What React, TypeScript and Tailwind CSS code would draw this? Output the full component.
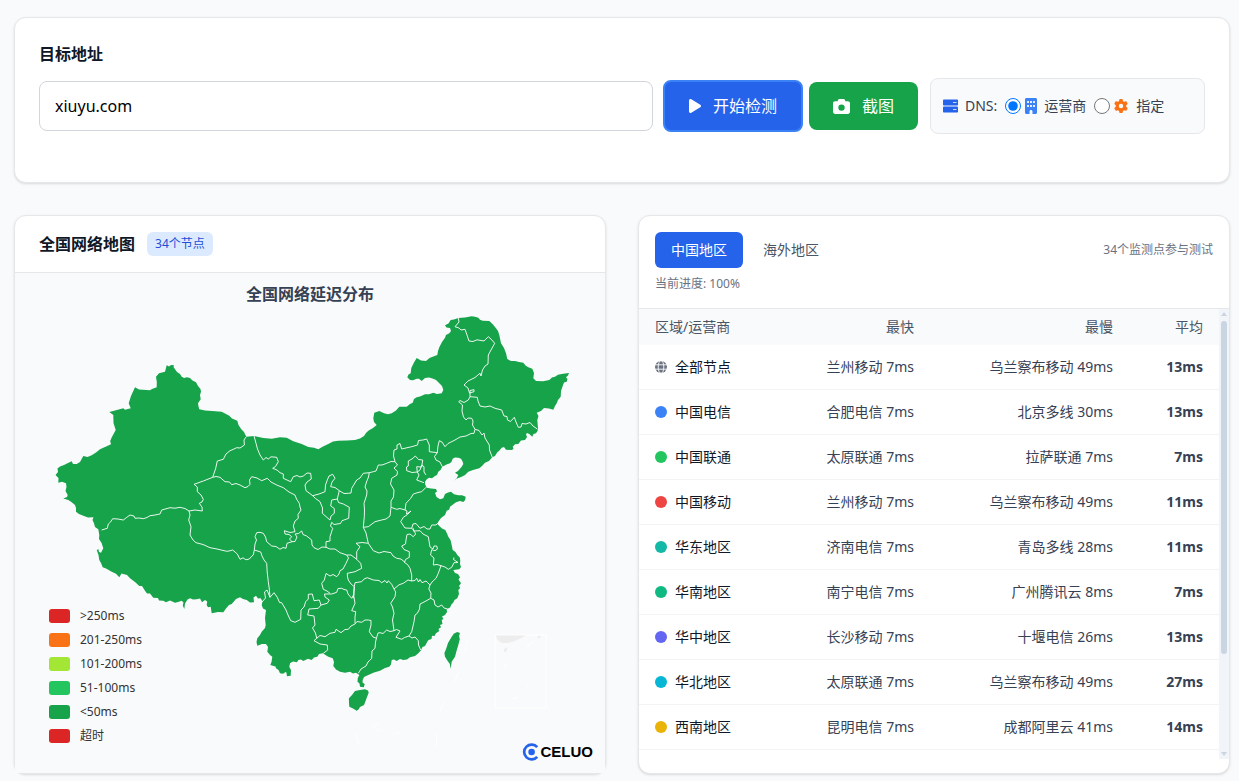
import { FaBuilding, FaCamera, FaGear, FaPlay } from "react-icons/fa6"

const regions = [
  { name: "全部节点", color: "", fastest: "兰州移动 7ms", slowest: "乌兰察布移动 49ms", avg: "13ms" },
  { name: "中国电信", color: "bg-[#3b82f6]", fastest: "合肥电信 7ms", slowest: "北京多线 30ms", avg: "13ms" },
  { name: "中国联通", color: "bg-[#22c55e]", fastest: "太原联通 7ms", slowest: "拉萨联通 7ms", avg: "7ms" },
  { name: "中国移动", color: "bg-[#ef4444]", fastest: "兰州移动 7ms", slowest: "乌兰察布移动 49ms", avg: "11ms" },
  { name: "华东地区", color: "bg-[#14b8a6]", fastest: "济南电信 7ms", slowest: "青岛多线 28ms", avg: "11ms" },
  { name: "华南地区", color: "bg-[#10b981]", fastest: "南宁电信 7ms", slowest: "广州腾讯云 8ms", avg: "7ms" },
  { name: "华中地区", color: "bg-[#6366f1]", fastest: "长沙移动 7ms", slowest: "十堰电信 26ms", avg: "13ms" },
  { name: "华北地区", color: "bg-[#06b6d4]", fastest: "太原联通 7ms", slowest: "乌兰察布移动 49ms", avg: "27ms" },
  { name: "西南地区", color: "bg-[#eab308]", fastest: "昆明电信 7ms", slowest: "成都阿里云 41ms", avg: "14ms" },
]

const legend = [
  { label: ">250ms", color: "bg-[#dc2626]" },
  { label: "201-250ms", color: "bg-[#f97316]" },
  { label: "101-200ms", color: "bg-[#a3e635]" },
  { label: "51-100ms", color: "bg-[#22c55e]" },
  { label: "<50ms", color: "bg-[#16a34a]" },
  { label: "超时", color: "bg-[#dc2626]" },
]

const mainland =
  "M166.7 365.3L169 366.5L171 365L174 365.3L173.5 367L174.7 368.7L177 372L180 374L181.5 376.5L184 378L187 377.2L190 378L192.5 380.6L196 382.3L198 386L200.5 389L201 391.7L200 395L200.7 399.3L198 403.3L198.5 406.5L199.3 409.3L205 410.5L212 411L221.7 411.7L226 414L229.3 415.7L232 418.5L237.3 420.7L238.5 425L241.3 429.3L244 432L246.3 436.7L254 436L263.3 438L271.7 438.7L280 437.2L286.7 437.7L290 439.5L293.3 441.3L301.7 444L308.3 447L314 447.7L318.3 449.3L323 446.5L328.3 444L333 441.6L338.3 440.7L347 440.6L355 440L360 438.5L364 436L366 433L368.3 430.7L373 428L376.7 425L374 422L373.3 418.3L374.3 412.7L379.3 411L384 413.3L388 414.2L391.7 413.3L396 410.5L399.3 406.7L406.7 406.7L410 404L412.7 402.7L414 399L416.7 397.3L420 396.6L425 394.3L429 394.2L433.3 392.7L437 394L441.7 393.3L443.3 390L442 386L439.3 383.3L436 380L433.3 378.7L429 377.4L425 378L421.7 381L419 378.8L416.7 378.7L413 380.2L410 380L407.3 377.3L408.5 374.5L410.7 373.3L411.3 368L414 362.5L416.7 358L421 360.5L426 361L429.5 358L432.7 356.7L437.3 355L438 351L439.3 347.3L442 342L445 337.7L446 335L449.3 333.3L451 331L450 328L446.5 327.5L445 325.3L448.5 323.5L450.7 320L454 319.5L458.3 318L465 317.5L471.7 316.3L475 316.8L478.3 317.7L480 319.8L482.7 320.7L489.3 321L493 324.5L496 328.3L498 331L499.3 335L501 343.3L504 348L506 353.3L507.3 359L511 361L515 361L519 362L523.3 362.7L525.5 365.5L528.3 367.3L532.3 368.7L534 373L533.3 378.3L536 381L543 381.2L549.3 380L552 377.5L555 376.7L558 374.8L561.7 374L565 373.5L569 373L568 375.5L566 377.3L567.5 379L566.7 381.7L564 382.5L562.7 386L561 391L560.7 396.7L558 400L556.7 403.3L555 406L553.3 409.7L549 408.5L544 408L541 411L536.7 412.7L538.5 416L537.3 420L538 428.3L537.5 431L536 433.3L533.5 434L532.3 436.7L529.3 434L527 433L526 434.3L527 437L525 440L521 440.5L518.3 444L515 444.2L512.7 446.7L513.5 449L511.7 450L506 449.7L504 447L501.7 447.7L499 451L497.3 452.3L495 456L492.3 457.3L489 461L485 462.7L482 466L479.3 468.3L473 470L468.3 471.7L465 475L461.7 476.7L457 478.5L454 480.7L456.5 478.5L458.3 475L455 472.7L458 471L461.7 466.7L463.3 464L462.7 461.7L461 458.7L458.3 457.7L455 457.6L452.7 458.7L451.5 461.8L450 463.3L446.5 464.5L442.3 466.7L440.5 470L438.3 471.7L437 475L435 476L432 478.2L429.3 477.7L427 479L425 481.7L425.2 484.6L426.7 487.7L431 488.5L436 489L437 491.5L435 493L436.5 497L440 499.3L443.3 498.3L445 494L448 492.6L451 491.7L454 494.2L458.3 495.3L462 495.3L465.7 496.7L465.2 500L463.3 502L460 500.9L456 502.3L453 504.6L450 506.7L449.3 509.5L446.7 510.7L445 515L441 518L438.3 521.7L437.5 524L439.3 526L442 528.6L445.3 530L447 533.5L448.3 536.7L450.5 540L451.3 543.3L452.7 550L455.5 552L457.3 555L459.8 557.5L460.3 560.7L460 564L461 567L459.3 569.3L453.3 570L455 573L458 574L460 577.3L458.5 579.5L461 583.3L459 586L460.2 588L458.3 590L459 594L457.3 598.3L454.5 600L453 603L451.7 604L450 607.5L446.7 609.3L447 612L445 615L442 616.5L443.5 619L441.7 620L442.5 624L440 625L441 627.3L438.5 629L439.3 631L436 633.3L434.5 636L432 635.7L431.5 639L428.5 640L427.3 641.7L425 646L422.5 647L420.7 650.7L418.3 653.3L415 656L410 657.2L407 659.5L403.3 660L400 659L396.7 661L394 659.6L391.7 660L391 664.5L389.3 666.7L385 668L380 670.7L374 672.5L368.3 675L364 677L362.7 680L362.5 682.5L364.7 684L363.8 687.3L360 686.7L359.5 683.5L357.5 681.7L357.8 678L359.3 675L356 672.8L353 673.5L350 671.7L345 672.8L340 671.7L336 669.5L333.3 666L334 662L332.7 658.3L328.3 656.7L322.7 653.3L319 654L317.3 656.7L314 657.5L311.7 660L308 658.7L303.3 661L301 659.4L298.3 660L297 662.3L293 661.5L290 663.3L289.3 667L291 670L290.7 675.7L287 676.3L286.6 673.5L286 671.7L283 673.8L280 673.3L278.5 670L276 668.3L275.5 666.4L270.3 665L271.5 662L272.3 656.7L270 655L267.3 651.7L268 647L266 644L262 644L257.3 645.7L256.5 642L257.3 638.3L260 635L261.7 631.7L265 628L265.7 625L265 618L266 610L263 608.5L261.7 605L262.5 601.5L260.7 598.3L258 598.5L256 595.7L253.5 597.5L254 602.3L250 602.4L246.7 600L243 598.9L240 597.3L236 599L231.7 604L229 605L226 608.5L223.3 612.3L218 612L211.7 613.3L210.7 606.7L208 607.2L206.7 605L207.2 601.5L205 600L202 602.2L200 598.5L196.7 599.3L193 599.5L190 598.3L187.5 599.5L185 603.5L184.3 609L182.8 605.5L183.5 602.5L181.7 600.7L178 602L175 602.7L170 600.4L166 602.3L163.3 600.7L159 600.5L158 598L153.3 597.7L150 593.5L147 593.5L145 590.7L142 586L139.3 586L135 582L130 578.3L127 575L123.3 574L121.5 573.5L119.3 577.3L116 573.8L111.7 571.7L106 568.5L102.7 567.3L101 563L99.3 560L98.5 555L96.7 550L98.4 549.3L99 552L101 552.7L103.3 548.3L101.6 543L99 539L99.3 535L98.3 529.3L95 527L94 523.3L92.5 520L93.5 517.2L88 517.5L83.3 515.7L79 514L76 511.7L76 508L75 505L71 501.8L68.3 500L63.3 498.6L67 497L67.7 495L65.5 491L66.5 487L66 483.3L62 481.8L58.3 482.7L58.5 478L55.5 475L58 472L57.5 468.5L60 466.5L64 465L68 463L71.7 461.2L73 464L76.7 464L80 462L83.3 456L87.5 457L91.7 455.3L96 452.5L100 449.3L105 447L111 444.3L110.2 441L111.8 437.3L115.7 430L113.5 423L113.3 415L109.3 412L115 410.5L123.3 408.3L125 409.7L130.7 408.3L128.7 403.3L131 396L135 387.3L139 389.5L150 390.3L152 389L156.7 387.3L156.8 382L156 376.7L159 373.3L165 371.7Z"

const islands = [
  "M360 690L365 689.3L368 690.5L368.7 692.7L367 697L365.3 701.7L364 705L360 707L358.5 709.5L356.7 710.7L353 708.5L349.3 706.7L349 703L348.9 698.3L352 695L355 691Z",
  "M457.3 632L460 633L459 636L459.8 639L458.3 645L456.5 651L455 656.7L451.7 661.7L450.7 668.7L449.8 664L447 660L445 656.7L444.4 653L446 649.3L448 643L451.7 636.7L454 633.5Z",
]

const borders = [
  "M246 437L244 440L244.4 445L240 448L236.7 447.7L234 449L230 450.7L226 454L223.3 459.3L217.3 461L215.7 468.3L212.7 477.3",
  "M212.7 477.3L216 476.5L220 477.3L225 481.7L229.5 482L231.7 484.7L236 483.5L240 485L245 487.7L248 486.5L250 484.3L249.5 480L251.7 476.7L257 478L261.7 480.7L267.3 478.3L271 482L276.7 485L283.3 487.7L289 492L295 495L296.5 499L299.3 503.3L300 507L301 510L298 514.5L298.3 518.3L295 521L293.3 526L295 531.7L290 532.5L284.3 530.7L285 534L289 534.5L291.7 536.7L289.5 539L292 541.7L287 543.3L286 548.3L283 547.5L280 549.3L276 546.5L271.7 546L266.7 541.7L265.5 537L263.3 533.3L260 532.3L256.7 532.7L255 536.7L256.5 540L255 544L254.3 550",
  "M212.7 477.3L203.3 481L194 484.3L197.3 487L197.3 491.7L201 495L203.3 499.3L202 502L199.3 503.3L202 507L202.3 511L195 510L189 511",
  "M189 511L185 508.5L180 507.3L175 508.2L170 507.7L161.7 510L160 514L158.3 514.3L155 515L150 515.7L147 517.5L143.3 518.7L139 518L135 518.3L134 516L130 515L126.5 517.5L123.3 520L118 519L112.7 518.7L110.5 522L108.3 524L107.3 528.3L101.7 530",
  "M189 511L190 515L188.7 520L191 526.7L190 535L193 540L196 542.7L203 544.5L210 547.7L217 549L226.7 551.3L229 551L232.7 550L237.3 554L240 559.3L243 557.8L246 559.8L249.3 559L252 556L253.3 555L254.3 550",
  "M254.3 550L260.7 552L262 556L264 560L266.7 563.3L267.2 572L268.3 581.7L269.3 589L270 597.3L267 590L264.5 592L265.5 598L262 602",
  "M270 597.3L274 592.7L277.3 597.3L279.5 602.5L281.7 602.7L286 610L288 615L290.7 620.7L295 622.3L300.7 619.3L301 610L304 607L305.7 601.7L308.3 599L308.3 594.3L312.3 594L314 600.7L319.3 600L321 605L318.3 608.3L309 609L307.7 615L314 616L315 625L312.5 628L315.5 633L316.7 638.3",
  "M321 605L327.3 603.3L329.3 600L325 597L324.5 594L331.7 594L336.7 592.3L338 588.5L341.7 588.3L344 589.5L346.7 590L348 594L351.7 598.3L354 594",
  "M346.7 555L348.5 558L346 563.3L343 569L340 570.7L339 574L336.7 576.7L333 574.5L330 576L326 573.5L324.3 580L321.7 583.3L323.3 589.3L327 591L330 593.3",
  "M346.7 555L351 555L356.7 559.3L360.7 563.3L361.7 568.3L355 571.7L347.3 573.3L347.5 577L348.3 580L351 584L354.3 586.7L353.3 598.3",
  "M354.3 586.7L353.8 596L355 603.3L351.7 610.7L355.7 611.7L355 617L355 623.3",
  "M316.7 638.3L320 635.5L325 636.7L330 633.3L335 632.3L336 629.3L341 632.7L345 629.5L348.3 629.3L351 626L355 624L357 621.5L361.7 622.3L365 620L368.3 620L371 620.5L371 625L369.3 631.7L373 637L376.7 638.3",
  "M316.7 638.3L314 640.7L320 644L327.3 645L327.7 650L323.3 653.3",
  "M376.7 637.3L375.5 642L375 648.3L372 651L371.7 658.3L368 662L366 666L361 669L358.3 673.3",
  "M376.7 637.3L378 633L380 632.7L383 633.5L386.7 630L390 631.5L394 630.7L396.5 629.5L400 631L396 637.3L401.7 639.3L404.5 637.5L409 636L412 638L415 637L418.3 640.7L418.5 645L420.7 650",
  "M394 589L395.7 592L395 596.7L390.7 603.3L392.5 607L394 613.3L392.5 620L394 630.7",
  "M354.3 586.7L355 582.7L361.7 581.7L364 579L367.3 577.7L373.3 580L379 580.5L381.7 582.7L385 580.5L387 583L388.3 580.7L391.7 584.3L394 589L399 584.8L403.3 583.3L408 580L411.7 581",
  "M411.7 581L411.7 575L410 568.3L407.5 564.5L404.5 562.5",
  "M404.5 562.5L405.5 559.5L409.3 557.3L409.3 551.7L404 549.5L401.7 546L405.5 544L406 540L407 534.5L410 534L413.3 536.7L415.7 534L413.5 530L411.7 528.3L405 528L400.7 521.7L403.3 517.3L407.5 514.5L411 511L406.5 514L407 511L405 510",
  "M405 510L406 503.3L410.7 498.3L413.3 494L418 492.5L421.7 491.7L426 487.3",
  "M405 510L400 508.5L396.7 509.3L391 507.3L390 516L386 519L381.7 520L375 521.7L368.3 526.7L363.3 527.3",
  "M411.7 528.3L413 524L416 523.5L420 528.3L424 526.5L427 529L430 529L431.7 525L436 525L438.3 522.7",
  "M413.3 528.3L413.5 531L420 530.7L423 534L428.3 536.7L429 541L430 547L433 549L434 546L436.7 546L437.5 549L435 550.7L431.7 549.7L430.5 555L434 558L433.3 565L437 564.5L441 565.7L445 567L448.3 569.3L451.7 567.3L454 562.7L458 562.5L453.5 559.5L454 557.5",
  "M441 565.7L438.3 573.3L436 578.3L432 582L430 585L428.8 589L431 593L430.7 598.3",
  "M411.7 581L415 580.5L416.7 578.3L418.5 582L420 579.5L422 582.7L426 581L430 585",
  "M430.7 598.3L425 601.5L420 604L419.5 609L417.3 613.3L415 615L414 621.7L411.7 631.7L409 636",
  "M430.7 598.3L434 600L435 605L438 607L441.7 605L444 608L447.7 609",
  "M254 436L256 443.3L257.5 449L260 455L263.3 460L266 457.5L268.3 459L271 456.8L276.7 457.3L278.3 461.7L275.5 466.5L272.7 468.3L277 470L280 472.7L283.3 474L283.3 478.3L290.7 481.7L293.3 476.7L297 475.5L300 477L303.3 476L307 473L310.7 473.3L311.3 479L307 482L305 485L306 490.7L312.7 495.7",
  "M312.7 495.7L319 494L325 491.7L325.5 485L327.3 480L329 476L332.7 474.3L335 478.3L332 482L330.7 486.7L335 487.5L339.3 490.7L337.3 499L331.7 500L330.7 506L334.3 508.5L334.3 513.3L331 516L330 520L326.5 517L322.3 513.3L322.5 508L320 501.7L315.5 498.5L312.7 495.7",
  "M337.3 499L338.5 502.5L343.3 504L349.3 507.3L348.7 518.3L342 520.7L340.5 523.5L334 524.5L331.7 522.3L330.5 526L332.7 528.3L330 536.7L330 541L326 541.7L326 547.3",
  "M291.7 541.7L295 541.5L297 537L295 534L298.5 533.5L301.7 531L303 534.5L306.7 536L311.7 540L312 545L314 547.7L318 549.5L322 547L326 547.3L330 549L335 549L340 552.7L346.7 555",
  "M339.3 490.7L344 493.5L348.3 493.3L351 493L351.7 488.3L356.7 480L360 478L363.3 473.3L369.3 472.7L373.3 471.7L376 471L378.3 465L382 465L386.7 463.3L391 461.5L395 461.7",
  "M369.3 472.7L368.5 477L366.5 482L365 487L367 491L366.7 495L364 503.3L364.5 510L364.3 516.7L363.3 527.3L366 533L368.3 543.3L362 542.5L356 543.3L360 546.7L356.7 551.7L356.7 559.3",
  "M368.3 543.3L373.3 550.7L379 553L384 551.5L391 552.7L393 556L396.7 558.3L401 559L405 562.3",
  "M395 461.7L397.5 465L394 468L397.5 471.7L397 475L391.7 478.3L390.5 484L394 490L393.5 497L391 501L391 507.3",
  "M395 461.7L393.5 456L394 450L397 449L397 445L400 443.5L401.7 449L408 447.5L411.7 446.7L417.5 445L418.5 440.5L423 440L426.7 439L429.3 445L429.3 451.7L437.3 452.7",
  "M437.3 452.7L434.5 456.5L436 460L440 462L442.3 466.7",
  "M437.3 452.7L438 446L439.3 440.7L442 442L445 446.7L448 443.5L455 440L460 437L466 436L471 433.5L474 433.3L475 429.3L479 430.5L482 435L484 433L485 438L489.3 445L489.5 450L492.3 457.3",
  "M475 429.3L472.5 425L473 421L471.7 418.3L468 418L466 420L463.5 417L462 411L462.5 405L458.7 401.7L460 400.5L464 402.5L468.3 400L470 396.7L477.3 397.3L478 401L480 406L485 407L490 406L495 408.3L501.7 410L504 416L507 416.5L507.5 420L510.5 421.5L514.3 417.3L516 422L518.3 427.3L521 427L522 423.5L526 424L530 422.5L533 426L537.3 429",
  "M458.3 318L459 322L455 326.7L459 328L461 330L465 329.3L467 335L469 341L473 341.5L477 339.8L484 341L488.3 336.7L491 339L494.7 343.3L491 350L488.3 355L488 364L485 366L482.5 370L481 376L480 373.3L475 377.5L468 381L464 385L468 388L469.5 393L474 391.7L474 389.7L470 390.5L470 396.7",
  "M415.3 456L412 459L408.3 461L408.3 466L406.5 467L406.7 470.7L412 472.5L417.3 472L416.7 466.7L421.7 467L422.7 460L418.5 459.5L415.3 456M421.7 465L424 466.7L424 472L426 475M417.3 472L419 475L416.7 480L424 482.7M417.3 472L420 470L421.7 465",
]

function ChinaMap() {
  return (
    <svg viewBox="15 306 590 467" className="block w-full" role="img" aria-label="全国网络延迟分布">
      <g fill="none" stroke="#ffffff" strokeWidth="1">
        <path d="M495 635H546V708H495Z" />
        <path d="M467.7 639L465 652M459 672L454 682M444 702L439 713M436.5 734V746M355 733L359 744M372 727L379 724M375 732L381 729M393 735L400 732" />
        <path d="M526 648L534 641M505 669L506 663M512 699L518 697M525 690L529 685" />
      </g>
      <g fill="#ededed">
        <path d="M496 635.5H526Q512 644 502 643Q497 641 496 635.5Z" />
        <path d="M537 636L541 636L539 639Z" />
        <path d="M504 649L508 647L506 652L504 652Z" />
      </g>
      <g fill="#16a34a">
        <path d={mainland} />
        {islands.map((d) => (
          <path key={d} d={d} />
        ))}
      </g>
      <g fill="none" stroke="#ffffff" strokeOpacity=".9" strokeWidth="1" strokeLinejoin="round">
        {borders.map((d) => (
          <path key={d} d={d} />
        ))}
      </g>
    </svg>
  )
}

function GlobeIcon() {
  return (
    <svg viewBox="0 0 12 12" className="size-3" aria-hidden="true">
      <circle cx="6" cy="6" r="6" fill="#6b7280" />
      <g fill="none" stroke="#ffffff" strokeWidth=".9">
        <path d="M0 3.8H12M0 8.2H12" />
        <ellipse cx="6" cy="6" rx="2.8" ry="6.4" />
      </g>
    </svg>
  )
}

function ServerIcon() {
  return (
    <svg viewBox="0 0 15 14" className="mr-[7px] h-[14px] w-[15px]" aria-hidden="true">
      <rect y=".5" width="15" height="6" rx=".8" fill="#2563eb" />
      <rect y="7.5" width="15" height="6" rx=".8" fill="#2563eb" />
      <path d="M10 3.5H13.5M10 10.5H13.5" stroke="#bfdbfe" strokeWidth="1.2" />
    </svg>
  )
}

function SearchCard() {
  return (
    <section className="rounded-xl border border-gray-200 bg-white p-6 shadow-sm">
      <label htmlFor="target" className="mb-3 block text-base font-bold text-gray-900">
        目标地址
      </label>
      <div className="mb-6 flex items-center gap-3">
        <div className="flex flex-1 items-center gap-1.5">
          <input
            id="target"
            type="text"
            defaultValue="xiuyu.com"
            className="mr-1 min-w-0 flex-1 rounded-lg border border-gray-300 bg-white px-[15px] py-3 text-base text-black outline-none"
          />
          <button
            type="button"
            className="flex items-center gap-3 rounded-lg border-2 border-[#3b82f6] bg-[#2563eb] px-6 py-3 text-base text-white"
          >
            <FaPlay className="h-4 w-3" />
            开始检测
          </button>
          <button
            type="button"
            className="flex items-center gap-3 rounded-lg bg-[#16a34a] px-6 py-3 text-base text-white"
          >
            <FaCamera className="size-[17px]" />
            截图
          </button>
        </div>
        <div className="flex h-14 w-[275px] items-center rounded-lg border border-gray-200 bg-gray-50 px-3 text-sm text-gray-700">
          <ServerIcon />
          <span className="mr-2">DNS:</span>
          <label className="mr-2 flex items-center">
            <input type="radio" name="dns" defaultChecked className="mr-1 size-4" />
            <FaBuilding className="mr-[7px] h-4 w-3 text-[#3b82f6]" />
            运营商
          </label>
          <label className="flex items-center">
            <input type="radio" name="dns" className="mr-1 size-4" />
            <FaGear className="mr-2 size-[14px] text-[#f97316]" />
            指定
          </label>
        </div>
      </div>
    </section>
  )
}

function MapCard() {
  return (
    <section className="rounded-xl border border-gray-200 bg-white shadow-sm">
      <div className="flex items-center gap-3 border-b border-gray-200 px-6 py-4">
        <h2 className="text-base font-bold text-gray-900">全国网络地图</h2>
        <span className="rounded-md bg-[#dbeafe] px-2 py-1 text-xs text-[#1d4ed8]">34个节点</span>
      </div>
      <div className="relative bg-gray-50 pt-[9px]">
        <h3 className="text-center text-base font-bold text-gray-700">全国网络延迟分布</h3>
        <ChinaMap />
        <ul className="absolute bottom-[25px] left-[34px] text-xs text-[#333333]">
          {legend.map((item) => (
            <li key={item.label} className="flex h-6 items-center gap-2.5">
              <span className={`h-[14px] w-[21px] rounded-[3px] ${item.color}`} />
              {item.label}
            </li>
          ))}
        </ul>
        <div className="absolute right-3 bottom-3 flex items-center gap-px">
          <svg viewBox="0 0 18 18" className="size-[18px]" aria-hidden="true">
            <path d="M15.2 4.2A7.4 7.4 0 1 0 15.2 13.8" fill="none" stroke="#2563eb" strokeWidth="2.7" />
            <circle cx="9.6" cy="9" r="3.3" fill="#2563eb" />
          </svg>
          <span className="font-['Liberation_Sans',sans-serif] text-[15px] leading-[18px] font-bold text-black">CELUO</span>
        </div>
      </div>
    </section>
  )
}

function ResultCard() {
  return (
    <section className="rounded-xl border border-gray-200 bg-white shadow-sm">
      <div className="border-b border-gray-200 p-4">
        <div className="flex items-center justify-between">
          <div className="flex gap-1">
            <button type="button" className="rounded-md bg-[#2563eb] px-4 py-2 text-sm text-white">
              中国地区
            </button>
            <button type="button" className="rounded-md px-4 py-2 text-sm text-gray-600">
              海外地区
            </button>
          </div>
          <span className="text-xs text-gray-500">34个监测点参与测试</span>
        </div>
        <p className="mt-2 text-xs text-gray-500">当前进度: 100%</p>
      </div>
      <div className="flex h-[450px]">
        <div className="flex-1">
          <table className="w-full table-fixed border-separate border-spacing-0 text-sm text-gray-700">
            <thead className="bg-gray-50 text-gray-600">
              <tr className="h-9">
                <th className="px-4 text-left font-normal">区域/运营商</th>
                <th className="px-4 text-right font-normal">最快</th>
                <th className="w-[199px] px-4 text-right font-normal">最慢</th>
                <th className="w-[90px] px-4 text-right font-normal">平均</th>
              </tr>
            </thead>
            <tbody>
              {regions.map((row) => (
                <tr key={row.name} className="h-[45px]">
                  <td className="border-b border-gray-100 px-4">
                    <div className="flex items-center gap-2 text-gray-900">
                      {row.color ? <span className={`size-3 rounded-full ${row.color}`} /> : <GlobeIcon />}
                      {row.name}
                    </div>
                  </td>
                  <td className="border-b border-gray-100 px-4 text-right whitespace-nowrap">{row.fastest}</td>
                  <td className="border-b border-gray-100 px-4 text-right whitespace-nowrap">{row.slowest}</td>
                  <td className="border-b border-gray-100 px-4 text-right font-bold">{row.avg}</td>
                </tr>
              ))}
            </tbody>
          </table>
        </div>
        {/* scrollbar */}
        <div className="flex w-2.5 flex-col items-center bg-slate-100 py-[3px]">
          <svg viewBox="0 0 6 4" className="mb-[5px] h-1 w-1.5" aria-hidden="true">
            <path d="M3 0L6 4H0Z" fill="#cbd5e1" />
          </svg>
          <div className="h-[333px] w-1.5 rounded-full bg-slate-300" />
          <svg viewBox="0 0 6 4" className="mt-auto h-1 w-1.5" aria-hidden="true">
            <path d="M0 0H6L3 4Z" fill="#cbd5e1" />
          </svg>
        </div>
      </div>
    </section>
  )
}

export default function App() {
  return (
    <main className="min-h-screen bg-gray-50 pt-[17px] pr-[9px] pb-[7px] pl-[14px] font-['Noto_Sans','Noto_Sans_CJK_SC',sans-serif]">
      <SearchCard />
      <div className="mt-8 grid grid-cols-2 gap-8">
        <MapCard />
        <ResultCard />
      </div>
    </main>
  )
}
